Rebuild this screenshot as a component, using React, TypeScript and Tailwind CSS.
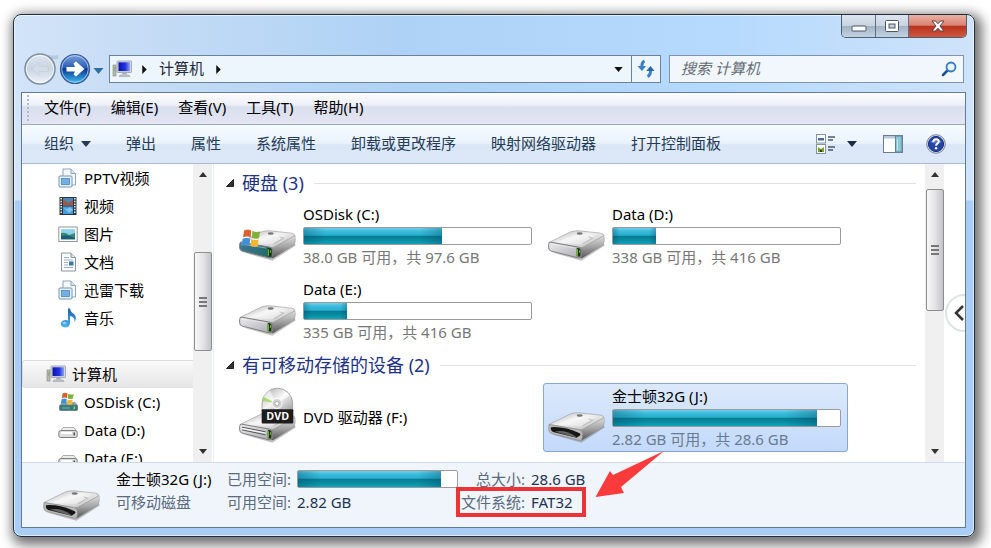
import type { ReactNode } from "react"

type DriveKind = "system" | "disk" | "dvd" | "removable"

interface Drive {
    name: string
    kind: DriveKind
    used?: number
    info?: string
    selected?: boolean
}

const MENUS = ["文件(F)", "编辑(E)", "查看(V)", "工具(T)", "帮助(H)"]
const COMMANDS = ["弹出", "属性", "系统属性", "卸载或更改程序", "映射网络驱动器", "打开控制面板"]

const DISKS: Drive[] = [
    { name: "OSDisk (C:)", kind: "system", used: 61, info: "38.0 GB 可用，共 97.6 GB" },
    { name: "Data (D:)", kind: "disk", used: 19, info: "338 GB 可用，共 416 GB" },
    { name: "Data (E:)", kind: "disk", used: 19, info: "335 GB 可用，共 416 GB" },
]

const REMOVABLE: Drive[] = [
    { name: "DVD 驱动器 (F:)", kind: "dvd" },
    { name: "金士顿32G (J:)", kind: "removable", used: 90, info: "2.82 GB 可用，共 28.6 GB", selected: true },
]

// Shared gradients for every drawing on the page
function Gradients() {
    return (
        <svg width="0" height="0" className="absolute" aria-hidden="true">
            <defs>
                <linearGradient id="metalTop" x1="0" y1="0" x2="1" y2="1">
                    <stop offset="0" stopColor="#b9b9b9" />
                    <stop offset="0.45" stopColor="#f2f2f2" />
                    <stop offset="1" stopColor="#b4b4b4" />
                </linearGradient>
                <linearGradient id="metalSide" x1="0" y1="0" x2="0" y2="1">
                    <stop offset="0" stopColor="#e0e0e0" />
                    <stop offset="0.5" stopColor="#a2a2a2" />
                    <stop offset="1" stopColor="#555" />
                </linearGradient>
                <linearGradient id="metalFront" x1="0" y1="0" x2="1" y2="1">
                    <stop offset="0" stopColor="#ececf0" />
                    <stop offset="1" stopColor="#a9a9b0" />
                </linearGradient>
                <linearGradient id="tealFront" x1="0" y1="0" x2="1" y2="0">
                    <stop offset="0" stopColor="#3f7690" />
                    <stop offset="1" stopColor="#1d6a66" />
                </linearGradient>
                <linearGradient id="disc" x1="0" y1="0" x2="1" y2="1">
                    <stop offset="0" stopColor="#a8aaa8" />
                    <stop offset="0.5" stopColor="#f5f5f5" />
                    <stop offset="1" stopColor="#9c9c9c" />
                </linearGradient>
                <linearGradient id="orb" x1="0" y1="0" x2="0" y2="1">
                    <stop offset="0" stopColor="#7fa3dc" />
                    <stop offset="0.45" stopColor="#2a5cb8" />
                    <stop offset="0.5" stopColor="#0b3493" />
                    <stop offset="1" stopColor="#3fc3f5" />
                </linearGradient>
                <linearGradient id="orbOff" x1="0" y1="0" x2="0" y2="1">
                    <stop offset="0" stopColor="#dde5ee" />
                    <stop offset="0.5" stopColor="#c9d5e1" />
                    <stop offset="1" stopColor="#eef4fa" />
                </linearGradient>
                <linearGradient id="screen" x1="0" y1="0" x2="1" y2="0">
                    <stop offset="0" stopColor="#0d12a8" />
                    <stop offset="0.6" stopColor="#2436e0" />
                    <stop offset="1" stopColor="#8fa2f2" />
                </linearGradient>
                <linearGradient id="note" x1="0" y1="0" x2="0" y2="1">
                    <stop offset="0" stopColor="#1c5fae" />
                    <stop offset="1" stopColor="#4db4f0" />
                </linearGradient>
            </defs>
        </svg>
    )
}

function Flag() {
    return (
        <g stroke="#fff" strokeOpacity="0.35" strokeWidth="1">
            <path d="M13 4 Q24 -2 35 4 L33 25 Q22 19 10 25Z" fill="#d9602c" />
            <path d="M38 5 Q49 11 62 6 L58 27 Q47 31 36 26Z" fill="#7fb23c" />
            <path d="M9 29 Q20 23 32 29 L29 50 Q18 44 5 50Z" fill="#3f8fd6" />
            <path d="M35 30 Q46 35 57 31 L54 51 Q43 55 32 50Z" fill="#f2b632" />
        </g>
    )
}

function DriveIcon({ kind }: { kind: DriveKind }) {
    const removable = kind === "removable"
    return (
        <svg viewBox="0 0 171 170" className="h-[57px] w-[57px]" aria-hidden="true">
            <g transform="translate(0 78)">
                <path d="M10 66 L100 92 L170 46 L168 40 L100 80Z" fill="#555" opacity="0.35" />
                <path d="M98 50 L168 16 Q171 30 166 44 L104 83 Q96 87 96 80Z" fill="url(#metalSide)" stroke="#777" strokeWidth="1" />
                <path d="M3 37 L68 5 Q80 1 94 2 L158 9 Q168 11 167 17 L106 50 Q100 53 92 52Z" fill="url(#metalTop)" stroke="#a0a0a0" strokeWidth="2" />
                <path d="M28 36 L78 13 Q84 10 94 11 L142 16 L98 42Z" fill="#fff" opacity="0.35" />
                <ellipse cx="95" cy="10" rx="9" ry="4" fill="#777" />
                <path d="M122 20 L134 24 L104 41" fill="none" stroke="#aaa" strokeWidth="2" />
                {removable ? (
                    <>
                        <path d="M3 37 L92 52 Q104 54 104 64 L103 78 Q102 87 92 84 L10 64 Q1 60 2 50Z" fill="#b9b9b9" stroke="#858585" strokeWidth="2" />
                        <path d="M9 45 Q50 42 95 63 Q101 68 91 73 L86 77 L18 60 Q6 56 9 45Z" fill="#151515" />
                        <path d="M20 58 Q55 52 84 74 L86 77Z" fill="#666" />
                    </>
                ) : (
                    <>
                        <path d="M8 36 L92 51 Q101 53 101 62 L100 78 Q98 85 90 83 L10 63 Q2 61 2 53 L2 43 Q2 35 8 36Z" fill={kind === "system" ? "url(#tealFront)" : "url(#metalFront)"} stroke="#7d7d7d" strokeWidth="3" />
                        {kind === "dvd" && (
                            <>
                                <path d="M9 45 L80 59 M9 53 L80 68" stroke="#555" strokeWidth="3" />
                                <path d="M9 49 L80 63" stroke="#fff" strokeWidth="3" />
                            </>
                        )}
                        {kind !== "dvd" && <path d="M8 41 L82 54" stroke="#fff" strokeWidth="2" opacity="0.6" />}
                        <path d="M86 54 Q98 52 98 62 L97 80 L86 78Z" fill="#1d2f10" />
                        <path d="M88 57 L88 77" stroke="#6edb2e" strokeWidth="3" />
                        <path d="M95 60 L94 68" stroke="#b5f18a" strokeWidth="2" />
                    </>
                )}
            </g>
            {kind === "system" && (
                <g transform="translate(2 75)">
                    <Flag />
                </g>
            )}
            {kind === "dvd" && (
                <>
                    <path d="M69 74 V52 A46 46 0 0 1 161 52 V74Z" fill="url(#disc)" stroke="#8b8b8b" strokeWidth="2" />
                    <path d="M113 52 L72 34 Q78 20 92 12Z" fill="#fff" opacity="0.6" />
                    <path d="M113 52 L70 44 L73 32Z" fill="#9edb55" opacity="0.8" />
                    <path d="M113 52 L140 16 L152 28Z" fill="#fff" opacity="0.7" />
                    <circle cx="114" cy="52" r="15" fill="#d0d0d0" stroke="#fff" strokeWidth="3" />
                    <circle cx="114" cy="52" r="6" fill="#fff" stroke="#999" strokeWidth="2" />
                    <rect x="68" y="69" width="95" height="43" rx="3" fill="#1d1d1d" />
                    <text x="116" y="102" textAnchor="middle" fontSize="32" fontWeight="700" fontFamily="Open Sans, sans-serif" fill="#fff">DVD</text>
                </>
            )}
        </svg>
    )
}

function ComputerIcon() {
    return (
        <svg viewBox="0 0 20 18" className="h-[18px] w-5 shrink-0" aria-hidden="true">
            <rect x="1" y="5" width="3" height="11" fill="#b9bdb4" stroke="#7e8479" strokeWidth="0.6" />
            <path d="M2 8 H3.4 M2 10 H3.4" stroke="#62aa3a" />
            <rect x="5" y="1" width="14.5" height="11.5" rx="0.6" fill="#d6d9e2" stroke="#8a8fa0" strokeWidth="0.7" />
            <rect x="6.5" y="2.3" width="11.5" height="8.8" fill="url(#screen)" />
            <path d="M10.5 12.5 H14.5 L15 14.6 H10Z" fill="#a9adb8" />
            <path d="M8 15 H17 L18 16.6 H7Z" fill="#c8cbd3" stroke="#8d92a0" strokeWidth="0.5" />
        </svg>
    )
}

function LibraryIcon() {
    return (
        <svg viewBox="0 0 20 20" className="h-5 w-5" aria-hidden="true">
            <path d="M5 1 H13 L17.5 5.5 V17 H5Z" fill="#f5f9fd" stroke="#8da6bf" />
            <path d="M13 1 V5.5 H17.5" fill="#dbe7f3" stroke="#8da6bf" />
            <rect x="1" y="8" width="13" height="11" rx="1" fill="#eaf3fb" stroke="#6e93b7" />
            <rect x="3.5" y="10.5" width="8" height="6" fill="#73b1e4" stroke="#4a86bd" strokeWidth="0.8" />
        </svg>
    )
}

function VideoIcon() {
    return (
        <svg viewBox="0 0 20 20" className="h-5 w-5" aria-hidden="true">
            <rect x="1.5" y="1" width="17" height="18" fill="#29363f" />
            <rect x="5" y="2" width="10" height="7.5" fill="#4a89b8" />
            <rect x="5" y="10.5" width="10" height="7.5" fill="#479ada" />
            <path d="M5 3 L10 7 L15 4 V9.5 H5Z" fill="#9b5a49" />
            <path d="M5 11 L9 13 L12 11 L15 14 L11 17Z" fill="#7cc5f2" />
            <path d="M3.2 2 V18 M16.8 2 V18" stroke="#dfe7ea" strokeWidth="1.6" strokeDasharray="1.5 1.2" />
        </svg>
    )
}

function PictureIcon() {
    return (
        <svg viewBox="0 0 20 20" className="h-5 w-5" aria-hidden="true">
            <rect x="0.8" y="3" width="18.4" height="14.5" fill="#fbfcfd" stroke="#8d9aa6" />
            <rect x="3" y="5.2" width="14" height="10" fill="#8fd0ec" />
            <path d="M3 9 Q8 8 11 11 L17 9 V15.2 H3Z" fill="#3a8c74" />
            <path d="M3 12 Q9 10 17 14 V15.2 H3Z" fill="#1c5d77" />
        </svg>
    )
}

function DocumentIcon() {
    return (
        <svg viewBox="0 0 20 20" className="h-5 w-5" aria-hidden="true">
            <path d="M3.5 1 H13 L17.5 5.5 V19 H3.5Z" fill="#fdfdfe" stroke="#8a95a3" />
            <path d="M13 1 V5.5 H17.5" fill="#dde3ea" stroke="#8a95a3" />
            <path d="M6 5.5 H11 M6 8 H15 M6 10.5 H10 M6 13 H10 M6 15.5 H15" stroke="#9eb0c4" />
            <rect x="11" y="9.5" width="4.5" height="4" fill="#3679ad" />
        </svg>
    )
}

function MusicIcon() {
    return (
        <svg viewBox="0 0 20 20" className="h-5 w-5" aria-hidden="true">
            <path d="M10 0.5 H12 Q12.5 4 16 6 Q19.5 9 16.5 14 Q17 9 12 8 V15.5 Q11.5 19.5 7 19.5 Q2.5 19 2.8 15.5 Q3.5 12 8 12 Q9.5 12 10 12.5Z" fill="url(#note)" />
            <ellipse cx="6.5" cy="15" rx="2" ry="1.3" fill="#a5dcfa" opacity="0.8" />
        </svg>
    )
}

function SmallSystemIcon() {
    return (
        <svg viewBox="0 0 20 20" className="h-5 w-5" aria-hidden="true">
            <path d="M2 13 L5 10 H17 L19.5 13 V18.5 H1.5Z" fill="#8fa3a3" />
            <rect x="1.5" y="13" width="18" height="5.5" rx="1" fill="#39797c" stroke="#6d7f80" strokeWidth="0.7" />
            <path d="M4 16 H12" stroke="#6fb9bb" />
            <rect x="15.5" y="14.5" width="1.5" height="2.5" fill="#84e05a" />
            <g transform="translate(1.5 0.5) scale(0.23)">
                <Flag />
            </g>
        </svg>
    )
}

function SmallDiskIcon() {
    return (
        <svg viewBox="0 0 20 20" className="h-5 w-5" aria-hidden="true">
            <path d="M2 12 L5 7.5 H16 L19 12Z" fill="#ededed" stroke="#9a9a9a" strokeWidth="0.8" />
            <rect x="0.8" y="10.5" width="18.4" height="7" rx="2" fill="#dcdcde" stroke="#7f7f7f" />
            <path d="M3 13 H14" stroke="#fff" strokeWidth="2" />
            <rect x="15.5" y="12.5" width="1.5" height="3" fill="#555" />
        </svg>
    )
}

function SpaceBar({ used, label }: { used: number; label: string }) {
    return (
        <div role="progressbar" aria-label={label} aria-valuenow={used} className="h-[18px] w-full rounded-[2px] border border-[#9b9b9b] bg-white">
            <div className="h-full bg-[linear-gradient(to_bottom,#6fcfe6_0%,#3bbcdc_20%,#27aece_46%,#077a90_50%,#088da3_75%,#0fa5bb_100%)]" style={{ width: `${used}%` }}>
                <div className="h-full bg-[linear-gradient(to_right,rgba(0,60,90,0.3),transparent_16%,transparent_84%,rgba(0,60,90,0.3))]" />
            </div>
        </div>
    )
}

function DriveTile({ drive }: { drive: Drive }) {
    return (
        <button
            type="button"
            className={
                drive.selected
                    ? "flex h-[69px] items-start rounded-[3px] border border-[#86a8d0] bg-gradient-to-b from-[#dce9fb] to-[#c3dafb] pr-[6px] pl-1 text-left"
                    : "flex h-[69px] items-start rounded-[3px] border border-transparent pr-[6px] pl-1 text-left"
            }
        >
            <span className="mt-[2px] mr-[7px] w-[57px] shrink-0">
                <DriveIcon kind={drive.kind} />
            </span>
            {drive.info ? (
                <span className="flex flex-1 flex-col pt-[2px]">
                    <span className="leading-5">{drive.name}</span>
                    <span className="mt-[3px]">
                        <SpaceBar used={drive.used ?? 0} label={drive.name} />
                    </span>
                    <span className={drive.selected ? "mt-px leading-[22px] text-[#6a7a90]" : "mt-px leading-[22px] text-[#777]"}>{drive.info}</span>
                </span>
            ) : (
                <span className="self-center">{drive.name}</span>
            )}
        </button>
    )
}

function DriveGroup({ title, drives }: { title: string; drives: Drive[] }) {
    return (
        <section className="mb-[6px]">
            <h2 className="flex h-7 items-center pr-[9px] text-lg text-[#1e3287]">
                <svg viewBox="0 0 8 8" className="mr-2 ml-3 h-2 w-2 shrink-0" aria-hidden="true">
                    <path d="M7.5 0.5 V7.5 H0.5Z" fill="#333" stroke="#222" />
                </svg>
                {title}
                <span className="ml-[10px] h-px flex-1 bg-[#e2e2e6]" />
            </h2>
            <div className="mt-1 grid grid-cols-[repeat(auto-fill,305px)] gap-x-1 gap-y-[6px] pl-5">
                {drives.map((d) => (
                    <DriveTile key={d.name} drive={d} />
                ))}
            </div>
        </section>
    )
}

function ScrollBar({ before, size, after }: { before: number; size: number; after: number }) {
    return (
        <div className="flex w-[19px] shrink-0 flex-col items-center bg-[#f0f0f0]" aria-hidden="true">
            <svg viewBox="0 0 8 5" className="mt-2 mb-[9px] h-[5px] w-2 shrink-0">
                <path d="M0 5 L4 0 L8 5Z" fill="#333" />
            </svg>
            <div className="basis-0" style={{ flexGrow: before }} />
            <div
                className="flex w-[18px] basis-0 flex-col items-center justify-center gap-[2px] rounded-[2px] border border-[#8e8e8e] bg-gradient-to-r from-[#f7f7f7] via-[#e4e4e6] to-[#c4c4c8]"
                style={{ flexGrow: size }}
            >
                <span className="h-[2px] w-2 bg-[#777]" />
                <span className="h-[2px] w-2 bg-[#777]" />
                <span className="h-[2px] w-2 bg-[#777]" />
            </div>
            <div className="basis-0" style={{ flexGrow: after }} />
            <svg viewBox="0 0 8 5" className="my-2 h-[5px] w-2 shrink-0">
                <path d="M0 0 L4 5 L8 0Z" fill="#333" />
            </svg>
        </div>
    )
}

function NavItem({ icon, children }: { icon: ReactNode; children: ReactNode }) {
    return (
        <li>
            <a href="#" className="flex h-7 items-center pl-[36px] whitespace-nowrap">
                <span className="mr-[6px] w-5 shrink-0">{icon}</span>
                {children}
            </a>
        </li>
    )
}

function Down({ className }: { className: string }) {
    return (
        <svg viewBox="0 0 10 6" className={className} aria-hidden="true">
            <path d="M0 0 H10 L5 6Z" fill="currentColor" />
        </svg>
    )
}

function WindowButtons() {
    return (
        <div className="flex h-[23px] overflow-hidden rounded-b-[5px] border border-t-0 border-[#4e5f73]">
            <button type="button" aria-label="最小化" className="flex w-[34px] items-center justify-center border-r border-[#5d6f85] bg-[linear-gradient(to_bottom,#dce5ef_0%,#c8d3df_48%,#a3b3c4_52%,#c2d3e4_100%)]">
                <svg viewBox="0 0 16 14" className="h-[14px] w-4">
                    <rect x="1" y="7" width="14" height="5" rx="1" fill="#fff" stroke="#4c5664" />
                </svg>
            </button>
            <button type="button" aria-label="最大化" className="flex w-[33px] items-center justify-center border-r border-[#5d6f85] bg-[linear-gradient(to_bottom,#dce5ef_0%,#c8d3df_48%,#a3b3c4_52%,#c2d3e4_100%)]">
                <svg viewBox="0 0 16 14" className="h-[14px] w-4">
                    <rect x="1.5" y="1.5" width="13" height="11" rx="1" fill="#fff" stroke="#4c5664" />
                    <rect x="5" y="5" width="6" height="4" fill="#c4cfdb" stroke="#4c5664" />
                </svg>
            </button>
            <button type="button" aria-label="关闭" className="flex w-[57px] items-center justify-center bg-[linear-gradient(to_bottom,#eab0a3_0%,#d98373_46%,#b8341f_52%,#d0573e_100%)]">
                <svg viewBox="0 0 14 12" className="h-3 w-[14px]">
                    <path d="M1 1 H4.5 L7 3.7 L9.5 1 H13 L9 6 L13 11 H9.5 L7 8.3 L4.5 11 H1 L5 6Z" fill="#fff" stroke="#54404a" />
                </svg>
            </button>
        </div>
    )
}

function AddressRow() {
    return (
        <div className="flex h-7 items-center pr-[10px] pl-[9px]">
            <button type="button" aria-label="后退" className="-my-1 h-9 w-[35px]">
                <svg viewBox="0 0 35 36" className="h-9 w-[35px]">
                    <path d="M20 3 Q34 6 35 3 V8 H24Z" fill="#b5c9df" />
                    <circle cx="17" cy="18" r="15" fill="url(#orbOff)" stroke="#808f9f" strokeWidth="1.5" />
                    <circle cx="17" cy="18" r="13.5" fill="none" stroke="#fff" strokeOpacity="0.7" />
                    <path d="M9 18 L16 11.5 V15.5 H25 V20.5 H16 V24.5Z" fill="#d3dde7" stroke="#c4cfda" strokeWidth="0.7" />
                </svg>
            </button>
            <button type="button" aria-label="前进" className="-my-1 h-9 w-[35px]">
                <svg viewBox="0 0 35 36" className="h-9 w-[35px]">
                    <circle cx="17" cy="18" r="14.5" fill="url(#orb)" stroke="#3a5a92" strokeWidth="1.2" />
                    <circle cx="17" cy="18" r="13.3" fill="none" stroke="#c6dcf6" strokeOpacity="0.7" />
                    <path d="M8.5 16 H17 L15.5 12.500 L18 10.500 L26.5 18 L18 25.500 L15.500 23.500 L17 20.5 H8.5Z" fill="#fff" />
                </svg>
            </button>
            <button type="button" aria-label="最近浏览" className="flex w-4 justify-start text-[#2f6ea3]">
                <Down className="mt-1 h-[6px] w-[11px]" />
            </button>
            <div className="flex h-7 flex-1 items-center border border-[#6b8299] bg-[#edf5fd] pl-[2px]">
                <ComputerIcon />
                <svg viewBox="0 0 5 10" className="mr-[12px] ml-[10px] h-[9px] w-[5px]" aria-hidden="true">
                    <path d="M0 0 L5 5 L0 10Z" fill="#111" />
                </svg>
                <button type="button" className="pb-[2px] text-[#1d2a3a]">计算机</button>
                <svg viewBox="0 0 5 10" className="ml-3 h-[9px] w-[5px]" aria-hidden="true">
                    <path d="M0 0 L5 5 L0 10Z" fill="#111" />
                </svg>
                <button type="button" aria-label="展开地址" className="ml-auto pr-2 text-[#111]">
                    <Down className="h-[5px] w-[9px]" />
                </button>
                <button type="button" aria-label="刷新" className="flex h-full w-[29px] items-center justify-center border-l border-[#6b8299]">
                    <svg viewBox="0 0 18 18" className="h-[18px] w-[18px]">
                        <path d="M7.5 1 Q4.5 2.5 5 7 M10.5 16.5 Q14 15 13.5 9" fill="none" stroke="#3c7fc4" strokeWidth="3" />
                        <path d="M0.5 6 H9 L5 11Z" fill="#3c7fc4" />
                        <path d="M9.2 11 H17.5 L13.5 6Z" fill="#2c66a8" />
                    </svg>
                </button>
            </div>
            <label className="ml-2 flex h-7 w-[295px] items-center border border-[#7d94ab] bg-[#f1f7fd] pr-[6px] pl-[11px]">
                <input type="text" aria-label="搜索" placeholder="搜索 计算机" className="min-w-0 flex-1 bg-transparent pb-[2px] italic outline-none placeholder:text-[#666c74]" />
                <svg viewBox="0 0 16 16" className="h-4 w-4" aria-hidden="true">
                    <path d="M2 14 L6.5 9.5" stroke="#1c4f93" strokeWidth="2.5" strokeLinecap="round" />
                    <circle cx="10" cy="6" r="4.5" fill="#e5f4ff" stroke="#3279c4" strokeWidth="1.8" />
                </svg>
            </label>
        </div>
    )
}

function Toolbar() {
    return (
        <div className="flex h-[39px] shrink-0 items-center gap-[35px] border-b border-[#a6bdd6] bg-[linear-gradient(to_bottom,#f7fbff_0%,#e9f2fc_48%,#dbe7f6_52%,#dbe8f7_100%)] pr-[19px] pb-px pl-[22px] whitespace-nowrap text-[#243a57]">
            <button type="button" className="flex items-center gap-[7px]">
                组织
                <Down className="h-[6px] w-[10px]" />
            </button>
            {COMMANDS.map((c) => (
                <button key={c} type="button">{c}</button>
            ))}
            <div className="ml-auto flex items-center">
                <button type="button" aria-label="更改视图" className="flex items-center gap-[11px]">
                    <svg viewBox="0 0 20 20" className="h-5 w-5">
                        <rect x="0.5" y="0.5" width="9" height="8.5" fill="#fff" stroke="#8693a2" />
                        <rect x="2" y="4" width="6" height="2.5" fill="#466a95" />
                        <rect x="0.5" y="10.5" width="9" height="9" fill="#fff" stroke="#8693a2" />
                        <path d="M2 13 L5 15 L8 13 V18 H2Z" fill="#7ba32a" />
                        <path d="M4 16 H6 V18 H4Z" fill="#24400e" />
                        <path d="M12 3 H19 M12 6 H17 M12 13 H19 M12 16 H17" stroke="#4e5a69" strokeWidth="1.3" />
                    </svg>
                    <Down className="h-[6px] w-[10px] text-[#1c2b3d]" />
                </button>
                <button type="button" aria-label="预览窗格" className="ml-[26px]">
                    <svg viewBox="0 0 20 18" className="h-[18px] w-5">
                        <rect x="0.5" y="0.5" width="19" height="17" fill="#fff" stroke="#6c7c8e" />
                        <rect x="1" y="1" width="18" height="2.5" fill="#b9c9d8" />
                        <rect x="12.5" y="1" width="6.5" height="16" fill="#8cc6d4" stroke="#5e8698" />
                        <path d="M14.5 4 V15" stroke="#c5e8ee" />
                    </svg>
                </button>
                <button type="button" aria-label="帮助" className="ml-[23px]">
                    <svg viewBox="0 0 20 20" className="h-5 w-5">
                        <circle cx="10" cy="10" r="9.3" fill="#dfe4ef" stroke="#767f94" />
                        <circle cx="10" cy="10" r="7.6" fill="#2444a8" stroke="#1a2f7c" />
                        <path d="M4 8 Q10 1 16 8 Q10 11 4 8Z" fill="#7b9ae0" opacity="0.6" />
                        <path d="M7.2 8 Q7.5 5.2 10.2 5.3 Q13 5.5 12.7 7.9 Q12.4 9.2 10.9 10 Q10.1 10.6 10.1 11.7" fill="none" stroke="#fff" strokeWidth="2" />
                        <circle cx="10.1" cy="14.3" r="1.2" fill="#fff" />
                    </svg>
                </button>
            </div>
        </div>
    )
}

function DetailsPane() {
    return (
        <footer className="relative flex h-[65px] shrink-0 items-start border-t border-[#cfdcea] bg-[#f0f5fc] pt-[5px] leading-[22px] whitespace-nowrap text-[#5a6a80]">
            <div className="-mt-1 mr-4 ml-[21px] w-[57px]">
                <DriveIcon kind="removable" />
            </div>
            <div className="flex w-[111px] flex-col gap-px">
                <span className="text-black">金士顿32G (J:)</span>
                <span>可移动磁盘</span>
            </div>
            <dl className="grid w-[231px] grid-cols-[auto_1fr] gap-x-[6px] gap-y-px">
                <dt>已用空间:</dt>
                <dd className="flex items-center">
                    <SpaceBar used={90} label="已用空间" />
                </dd>
                <dt>可用空间:</dt>
                <dd className="text-[#1e3252]">2.82 GB</dd>
            </dl>
            <dl className="relative ml-[3px] grid grid-cols-[auto_auto] gap-x-[6px] gap-y-px">
                <dt className="text-right">总大小:</dt>
                <dd className="text-[#1e3252]">28.6 GB</dd>
                <dt>文件系统:</dt>
                <dd className="text-[#1e3252]">FAT32</dd>
                <div className="absolute -right-[1px] -bottom-[4px] -left-[5px] h-[30px] border-4 border-[#ee3338]" />
            </dl>
            <svg viewBox="0 0 70 48" className="absolute -top-[13px] left-[573px] h-12 w-[70px]" aria-hidden="true">
                <path d="M0.5 47 L15 21 L18 25 L69 1 L26 37 L29 43Z" fill="#fb3a3c" />
            </svg>
        </footer>
    )
}

export default function App() {
    return (
        <div className="flex h-screen min-h-[400px] overflow-hidden bg-white pt-[14px] pr-4 pb-[11px] pl-[13px] font-['Noto_Sans','Noto_Sans_CJK_SC',sans-serif] text-[15px] text-black">
            <Gradients />
            <div className="flex min-w-0 flex-1 flex-col rounded-[8px] border border-[#1f2d3d] bg-[linear-gradient(to_bottom,transparent_0,transparent_185px,#a9cdf5_186px),linear-gradient(to_right,#d2e4f8_0%,#c4dbf5_15%,#aed2f5_40%,#b6dafd_75%,#cfe3fa_100%)] shadow-[3px_4px_12px_4px_rgba(0,0,0,0.55),inset_0_0_0_1px_rgba(255,255,255,0.6)]">
                <header className="flex h-10 shrink-0 items-start justify-end pr-[7px]">
                    <WindowButtons />
                </header>
                <AddressRow />
                <div className="mt-[9px] mr-2 mb-2 ml-[7px] flex min-h-0 flex-1 flex-col border border-[#5f7b98] bg-white">
                    <nav className="flex h-[32px] shrink-0 items-center border-b border-[#9fabbd] bg-[linear-gradient(to_bottom,#fdfdff_0%,#eef0f8_38%,#d9dfee_45%,#e4e5f3_100%)] pb-[2px] pl-[5px]">
                        <span className="mr-[15px] h-[26px] border-l-2 border-dotted border-[#b3b8c6]" />
                        <div className="flex gap-5">
                            {MENUS.map((m) => (
                                <button key={m} type="button">{m}</button>
                            ))}
                        </div>
                    </nav>
                    <Toolbar />
                    <div className="flex min-h-0 flex-1 overflow-hidden">
                        <ul className="w-[171px] shrink-0 overflow-hidden">
                            <NavItem icon={<LibraryIcon />}>PPTV视频</NavItem>
                            <NavItem icon={<VideoIcon />}>视频</NavItem>
                            <NavItem icon={<PictureIcon />}>图片</NavItem>
                            <NavItem icon={<DocumentIcon />}>文档</NavItem>
                            <NavItem icon={<LibraryIcon />}>迅雷下载</NavItem>
                            <NavItem icon={<MusicIcon />}>音乐</NavItem>
                            <li className="mt-7">
                                <a href="#" className="flex h-7 items-center gap-[6px] rounded-l-[3px] border border-r-0 border-[#dcdcdc] bg-gradient-to-b from-[#fafafa] to-[#e6e6e6] pl-[23px]">
                                    <ComputerIcon />
                                    计算机
                                </a>
                            </li>
                            <NavItem icon={<SmallSystemIcon />}>OSDisk (C:)</NavItem>
                            <NavItem icon={<SmallDiskIcon />}>Data (D:)</NavItem>
                            <NavItem icon={<SmallDiskIcon />}>Data (E:)</NavItem>
                        </ul>
                        <ScrollBar before={67} size={99} after={91} />
                        <main className="ml-px min-w-0 flex-1 overflow-hidden border-l border-[#e8eef5] pt-[5px]">
                            <DriveGroup title="硬盘 (3)" drives={DISKS} />
                            <DriveGroup title="有可移动存储的设备 (2)" drives={REMOVABLE} />
                        </main>
                        <ScrollBar before={3} size={122} after={132} />
                        <div className="flex w-[21px] shrink-0 items-center overflow-hidden">
                            <button type="button" aria-label="展开侧栏" className="ml-px flex h-[38px] w-[38px] shrink-0 items-center rounded-full border-2 border-[#dfe3e8] pl-[7px]">
                                <svg viewBox="0 0 10 16" className="h-4 w-[10px]">
                                    <path d="M9 1 L2 8 L9 15" fill="none" stroke="#333" strokeWidth="2.5" />
                                </svg>
                            </button>
                        </div>
                    </div>
                    <DetailsPane />
                </div>
            </div>
        </div>
    )
}
